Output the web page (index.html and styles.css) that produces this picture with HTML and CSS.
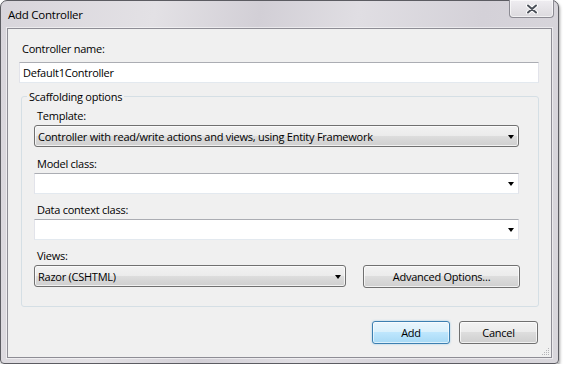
FILE: index.html
```html
<!DOCTYPE html>
<html lang="en">
<head>
  <meta charset="UTF-8">
  <title>Add Controller</title>
  <link rel="stylesheet" href="styles.css">
</head>
<body>
  <div class="window">
    <div class="titlebar">
      <span class="title">Add Controller</span>
      <div class="close">
        <svg width="12" height="10" viewBox="0 0 12 10">
          <path d="M2 1.5 L10 8.5 M10 1.5 L2 8.5" stroke="#fff" stroke-width="4" stroke-linecap="round"/>
          <path d="M2 1.5 L10 8.5 M10 1.5 L2 8.5" stroke="#4b5059" stroke-width="2" stroke-linecap="round"/>
        </svg>
      </div>
    </div>
    <div class="client">
      <div class="label top-label">Controller name:</div>
      <div class="textbox">Default1Controller</div>

      <fieldset class="group">
        <legend>Scaffolding options</legend>

        <div class="label">Template:</div>
        <div class="dropdown">
          <span>Controller with read/write actions and views, using Entity Framework</span>
          <i class="arrow"></i>
        </div>

        <div class="label">Model class:</div>
        <div class="combo"><span></span><i class="arrow"></i></div>

        <div class="label">Data context class:</div>
        <div class="combo"><span></span><i class="arrow"></i></div>

        <div class="label">Views:</div>
        <div class="views-row">
          <div class="dropdown views">
            <span>Razor (CSHTML)</span>
            <i class="arrow"></i>
          </div>
          <div class="btn advanced">Advanced Options...</div>
        </div>
      </fieldset>

      <div class="actions">
        <div class="btn default">Add</div>
        <div class="btn cancel">Cancel</div>
      </div>

      <svg class="grip" width="9" height="9" viewBox="0 0 9 9">
        <g fill="#b4b4b8">
          <rect x="7" y="1" width="1" height="1"/>
          <rect x="5" y="3" width="1" height="1"/><rect x="7" y="3" width="1" height="1"/>
          <rect x="3" y="5" width="1" height="1"/><rect x="5" y="5" width="1" height="1"/><rect x="7" y="5" width="1" height="1"/>
          <rect x="1" y="7" width="1" height="1"/><rect x="3" y="7" width="1" height="1"/><rect x="5" y="7" width="1" height="1"/><rect x="7" y="7" width="1" height="1"/>
        </g>
      </svg>
    </div>
  </div>
</body>
</html>
```

FILE: styles.css
```css
body {
  margin: 0;
  background: #fff;
}
.window {
  position: relative;
  width: 559px;
  height: 364px;
  box-sizing: border-box;
  border: 1px solid #5c5c62;
  border-radius: 7px 7px 4px 4px;
  padding: 0 6px 5px 6px;
  background: linear-gradient(100deg, #d8d5db 0%, #e3e1e5 25%, #d2cfd6 42%, #e0dee3 58%, #d4d1d8 78%, #d9d7dc 100%);
  box-shadow: 1px 2px 3px rgba(0,0,0,0.35);
  display: flex;
  flex-direction: column;
  font-family: "Open Sans", "Noto Sans", sans-serif;
  font-size: 11px;
  letter-spacing: -0.25px;
  color: #000;
}
.titlebar {
  height: 27px;
  display: flex;
  align-items: flex-start;
}
.title {
  margin-top: 6px;
  padding-left: 1px;
  line-height: 15px;
  font-size: 11.5px;
}
.close {
  margin-left: auto;
  margin-right: -2px;
  margin-top: -1px;
  width: 45px;
  height: 18px;
  box-sizing: border-box;
  border: 1px solid #8c8b93;
  border-top: none;
  border-radius: 0 0 4px 4px;
  background: linear-gradient(#efedf1, #dcdade);
  box-shadow: inset 0 0 0 1px rgba(255,255,255,0.6);
  display: flex;
  align-items: center;
  justify-content: center;
}
.client {
  position: relative;
  flex: 1;
  background: #f0f0f0;
  border: 1px solid #8e8d95;
  box-shadow: 0 0 0 1px rgba(255,255,255,0.5);
  padding: 12px 12px 0 11px;
  display: flex;
  flex-direction: column;
}
.label {
  line-height: 15px;
  height: 15px;
  margin-bottom: 2px;
  padding-left: 3px;
  white-space: nowrap;
}
.top-label {
  margin-bottom: 6px;
}
.textbox, .combo {
  height: 21px;
  box-sizing: border-box;
  background: #fff;
  border: 1px solid #e2e3ea;
  border-top-color: #abadb3;
  border-bottom-color: #e3e9ef;
  padding: 0 4px 0 3px;
  line-height: 19px;
  display: flex;
  align-items: center;
}
.combo {
  margin-bottom: 8px;
}
.group {
  margin: 6px 0 0 2px;
  padding: 4px 19px 18px 12px;
  border: 1px solid #d5dfe5;
  border-radius: 3px;
  min-width: 0;
}
.group legend {
  margin-left: -7px;
  padding: 0 2px;
  line-height: 15px;
}
.dropdown {
  height: 22px;
  box-sizing: border-box;
  border: 1px solid #707070;
  border-radius: 3px;
  background: linear-gradient(#f2f2f2 0%, #ebebeb 50%, #dddddd 50%, #cfcfcf 100%);
  box-shadow: inset 0 0 0 1px rgba(255,255,255,0.7);
  padding: 0 4px 0 3px;
  display: flex;
  align-items: center;
  margin-bottom: 9px;
}
.dropdown span, .combo span {
  flex: 1;
  white-space: nowrap;
}
.arrow {
  width: 0;
  height: 0;
  border-left: 3.5px solid transparent;
  border-right: 3.5px solid transparent;
  border-top: 4px solid #000;
  margin-top: 1px;
}
.views-row {
  display: flex;
  align-items: flex-start;
  margin-top: 2px;
}
.views {
  width: 312px;
  margin-bottom: 0;
}
.btn {
  height: 23px;
  box-sizing: border-box;
  border: 1px solid #707070;
  border-radius: 3px;
  background: linear-gradient(#f2f2f2 0%, #ebebeb 50%, #dddddd 50%, #cfcfcf 100%);
  box-shadow: inset 0 0 0 1px rgba(255,255,255,0.7);
  display: flex;
  align-items: center;
  justify-content: center;
}
.advanced {
  width: 157px;
  margin-left: auto;
  margin-right: -1px;
}
.actions {
  display: flex;
  justify-content: flex-end;
  gap: 9px;
  margin-top: 14px;
  padding-right: 1px;
}
.default {
  width: 78px;
  border-color: #3c7fb1;
  background: linear-gradient(#eaf6fd 0%, #d9f0fc 50%, #bee6fd 50%, #a7d9f5 100%);
  box-shadow: inset 0 0 0 1px rgba(255,255,255,0.6), 0 0 2px rgba(60,160,220,0.5);
}
.cancel {
  width: 79px;
}
.grip {
  position: absolute;
  right: 1px;
  bottom: 1px;
}
```
